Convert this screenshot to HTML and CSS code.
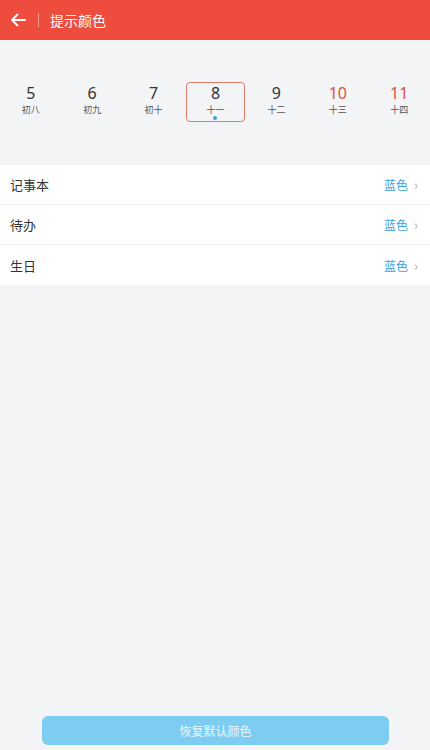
FILE: index.html
```html
<!DOCTYPE html>
<html lang="zh">
<head>
    <meta charset="UTF-8">
    <meta name="viewport" content="width=device-width, initial-scale=1.0">
    <title>提示颜色</title>
    <link rel="stylesheet" href="styles.css">
</head>
<body>

<div class="page">
    <div class="header">
        <svg class="back" width="16" height="14" viewBox="0 0 16 14">
            <path d="M15 7H2M7.5 1.5L2 7l5.5 5.5" fill="none" stroke="#fff" stroke-width="1.8" stroke-linecap="round" stroke-linejoin="round"/>
        </svg>
        <span class="divider"></span>
        <span class="title">提示颜色</span>
    </div>

    <div class="week">
        <div class="day"><div class="num">5</div><div class="lunar">初八</div></div>
        <div class="day"><div class="num">6</div><div class="lunar">初九</div></div>
        <div class="day"><div class="num">7</div><div class="lunar">初十</div></div>
        <div class="day selected"><div class="num">8</div><div class="lunar">十一</div><span class="dot"></span></div>
        <div class="day"><div class="num">9</div><div class="lunar">十二</div></div>
        <div class="day weekend"><div class="num">10</div><div class="lunar">十三</div></div>
        <div class="day weekend"><div class="num">11</div><div class="lunar">十四</div></div>
    </div>

    <div class="list">
        <div class="row"><span class="label">记事本</span><span class="value">蓝色</span><span class="arrow">›</span></div>
        <div class="row"><span class="label">待办</span><span class="value">蓝色</span><span class="arrow">›</span></div>
        <div class="row"><span class="label">生日</span><span class="value">蓝色</span><span class="arrow">›</span></div>
    </div>

    <div class="spacer"></div>

    <button class="reset-btn">恢复默认颜色</button>
</div>

</body>
</html>
```

FILE: styles.css
```css
/* General */
body {
    margin: 0;
    font-family: "Noto Sans CJK SC", "Noto Sans", sans-serif;
    background: #f3f4f6;
    color: #333;
}

.page {
    height: 750px;
    display: flex;
    flex-direction: column;
}

/* Header */
.header {
    height: 40px;
    background: #ee4c3c;
    display: flex;
    align-items: center;
    padding-left: 10px;
    color: #fff;
}

.back {
    display: block;
}

.divider {
    width: 1px;
    height: 14px;
    background: rgba(255, 255, 255, 0.45);
    margin: 0 11px 0 12px;
}

.title {
    font-size: 14px;
    line-height: 20px;
}

/* Week strip */
.week {
    display: grid;
    grid-template-columns: repeat(7, 1fr);
    margin-top: 42px;
    height: 40px;
}

.day {
    position: relative;
    display: flex;
    flex-direction: column;
    align-items: center;
    padding-top: 3px;
}

.num {
    font-family: "Noto Sans", sans-serif;
    font-size: 16px;
    line-height: 16px;
    color: #333;
}

.lunar {
    margin-top: 3px;
    font-size: 9px;
    line-height: 11px;
    color: #555;
}

.weekend .num {
    color: #e0513f;
}

.selected {
    margin: 0 1px 0 2px;
    padding-top: 1.5px;
    border: 1.5px solid #df7a6c;
    border-radius: 4px;
}

.dot {
    position: absolute;
    bottom: 1px;
    left: 50%;
    width: 4px;
    height: 4px;
    margin-left: -2px;
    border-radius: 50%;
    background: #3c9fe0;
}

/* Setting rows */
.list {
    margin-top: 43px;
    background: #fff;
}

.row {
    height: 40px;
    display: flex;
    align-items: center;
    padding: 0 12px 0 10px;
    border-bottom: 1px solid #f3f3f3;
    box-sizing: border-box;
}

.row:last-child {
    border-bottom: none;
}

.label {
    flex: 1;
    font-size: 13px;
    color: #333;
}

.value {
    font-size: 12px;
    color: #3aa3dc;
}

.arrow {
    margin-left: 6px;
    font-size: 13px;
    color: #aaa;
}

.spacer {
    flex: 1;
}

/* Bottom button */
.reset-btn {
    align-self: center;
    width: 347px;
    height: 29px;
    margin-bottom: 5px;
    margin-left: 1px;
    border: none;
    border-radius: 6px;
    background: #7dcdf3;
    color: #eaf6fc;
    font-family: "Noto Sans CJK SC", sans-serif;
    font-size: 12px;
}
```
